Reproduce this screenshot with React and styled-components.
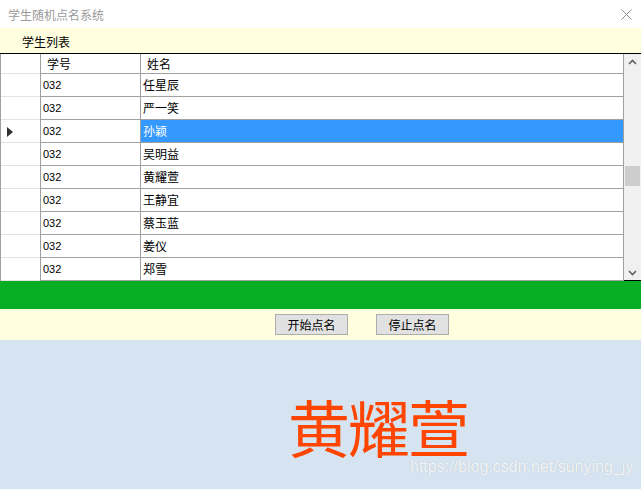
import React from 'react'
import styled, { createGlobalStyle } from 'styled-components'

const students = [
  { id: '032', name: '任星辰' },
  { id: '032', name: '严一笑' },
  { id: '032', name: '孙颖', selected: true },
  { id: '032', name: '吴明益' },
  { id: '032', name: '黄耀萱' },
  { id: '032', name: '王静宜' },
  { id: '032', name: '蔡玉蓝' },
  { id: '032', name: '姜仪' },
  { id: '032', name: '郑雪' },
]

const GlobalStyle = createGlobalStyle`
  html, body { margin: 0; padding: 0; background: #fff; }
  body { font-family: "Noto Sans CJK SC", "Liberation Sans", sans-serif; }
`

function App() {
  return (
    <Window>
      <GlobalStyle />
      <TitleBar>
        <Title>学生随机点名系统</Title>
        <CloseIcon width="11" height="11" viewBox="0 0 11 11">
          <path d="M0.5 0.5 L10.5 10.5 M10.5 0.5 L0.5 10.5" stroke="#8a8a8a" strokeWidth="1" fill="none" />
        </CloseIcon>
      </TitleBar>
      <MenuBand>学生列表</MenuBand>
      <Grid>
        <Table>
          <HeaderRow>
            <RowHead />
            <HeadCell $w={100}>学号</HeadCell>
            <HeadCell>姓名</HeadCell>
          </HeaderRow>
          {students.map((s, i) => (
            <Row key={i}>
              <RowHead>{s.selected && <Pointer />}</RowHead>
              <IdCell $w={100}>{s.id}</IdCell>
              <NameCell $selected={s.selected}>{s.name}</NameCell>
            </Row>
          ))}
        </Table>
        <ScrollBar>
          <Arrow viewBox="0 0 9 6">
            <path d="M1 5 L4.5 1.5 L8 5" stroke="#606060" strokeWidth="1.6" fill="none" />
          </Arrow>
          <Track>
            <Thumb />
          </Track>
          <Arrow viewBox="0 0 9 6">
            <path d="M1 1 L4.5 4.5 L8 1" stroke="#606060" strokeWidth="1.6" fill="none" />
          </Arrow>
        </ScrollBar>
      </Grid>
      <ProgressBand />
      <ButtonBand>
        <Button>开始点名</Button>
        <Button>停止点名</Button>
      </ButtonBand>
      <Stage>
        <BigName>黄耀萱</BigName>
        <Watermark>https://blog.csdn.net/sunying_jy</Watermark>
      </Stage>
    </Window>
  )
}

const Window = styled.div`
  width: 641px;
  height: 489px;
  display: flex;
  flex-direction: column;
  background: #fff;
  overflow: hidden;
`

const TitleBar = styled.div`
  height: 28px;
  display: flex;
  align-items: center;
  justify-content: space-between;
  padding: 0 9px 0 8px;
  background: #fff;
`

const Title = styled.span`
  font-size: 12px;
  color: #9a9a9a;
`

const CloseIcon = styled.svg`
  display: block;
`

const MenuBand = styled.div`
  height: 25px;
  background: #ffffe0;
  padding-left: 22px;
  font-size: 12px;
  line-height: 27px;
  color: #000;
  border-bottom: 1px solid #000;
`

const Grid = styled.div`
  height: 226px;
  display: flex;
  border-bottom: 1px solid #000;
  background: #fff;
`

const Table = styled.div`
  flex: 1;
  display: flex;
  flex-direction: column;
`

const HeaderRow = styled.div`
  height: 19px;
  display: flex;
  border-bottom: 1px solid #a0a0a0;
`

const Row = styled.div`
  height: 22px;
  display: flex;
  border-bottom: 1px solid #a0a0a0;
`

const RowHead = styled.div`
  width: 41px;
  flex: none;
  box-sizing: border-box;
  border-right: 1px solid #a0a0a0;
  border-left: 1px solid #a0a0a0;
  margin-bottom: -1px;
  box-shadow: inset 0 -1px 0 #e2e2e2;
  background: #fff;
  display: flex;
  align-items: center;
  padding-left: 6px;
`

const Pointer = styled.span`
  width: 0;
  height: 0;
  border-top: 5px solid transparent;
  border-bottom: 5px solid transparent;
  border-left: 6px solid #303030;
`

const HeadCell = styled.div`
  width: ${p => (p.$w ? `${p.$w}px` : 'auto')};
  flex: ${p => (p.$w ? 'none' : '1')};
  box-sizing: border-box;
  border-right: 1px solid #a0a0a0;
  padding-left: 6px;
  font-size: 12px;
  line-height: 19px;
  color: #000;
`

const IdCell = styled.div`
  width: ${p => p.$w}px;
  flex: none;
  box-sizing: border-box;
  border-right: 1px solid #a0a0a0;
  padding-left: 2px;
  font-family: "Liberation Sans", sans-serif;
  font-size: 11px;
  line-height: 22px;
  color: #000;
`

const NameCell = styled.div`
  flex: 1;
  box-sizing: border-box;
  border-right: 1px solid #a0a0a0;
  padding-left: 2px;
  font-size: 12px;
  line-height: 22px;
  color: ${p => (p.$selected ? '#fff' : '#000')};
  background: ${p => (p.$selected ? '#3399ff' : '#fff')};
`

const ScrollBar = styled.div`
  width: 17px;
  flex: none;
  background: #f0f0f0;
  display: flex;
  flex-direction: column;
  align-items: center;
  padding: 5px 0 4px;
  box-sizing: border-box;
`

const Arrow = styled.svg`
  width: 9px;
  height: 6px;
  flex: none;
`

const Track = styled.div`
  flex: 1;
  align-self: stretch;
  display: flex;
  flex-direction: column;
  padding: 0 1px;
`

const Thumb = styled.div`
  margin-top: 101px;
  height: 20px;
  background: #cdcdcd;
`

const ProgressBand = styled.div`
  height: 28px;
  background: #06ae26;
`

const ButtonBand = styled.div`
  height: 31px;
  background: #ffffe0;
  display: flex;
  align-items: center;
  padding-left: 275px;
  gap: 28px;
`

const Button = styled.button`
  width: 73px;
  height: 21px;
  padding: 0;
  margin: 0;
  background: #e1e1e1;
  border: 1px solid #adadad;
  font-family: "Noto Sans CJK SC", sans-serif;
  font-size: 12px;
  color: #000;
  line-height: 19px;
`

const Stage = styled.div`
  flex: 1;
  background: #d6e4f1;
  position: relative;
`

const BigName = styled.div`
  padding: 46px 0 0 288px;
  font-size: 62px;
  line-height: 80px;
  color: #ff4500;
  letter-spacing: -2px;
`

const Watermark = styled.div`
  position: absolute;
  left: 410px;
  top: 118px;
  font-family: "Liberation Sans", sans-serif;
  font-size: 16px;
  color: rgba(255, 255, 255, 0.85);
  text-shadow: 0 0 1px rgba(120, 120, 120, 0.4);
`

export default App
